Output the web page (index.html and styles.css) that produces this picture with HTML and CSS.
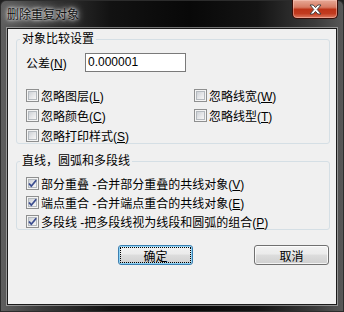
FILE: index.html
```html
<!DOCTYPE html>
<html>
<head>
<meta charset="utf-8">
<link rel="stylesheet" href="styles.css">
</head>
<body>
<div class="window">
  <div class="titlebar">
    <span class="title">删除重复对象</span>
    <div class="close">
      <svg width="13" height="11" viewBox="0 0 13 11"><path d="M1 1 H4.2 L6.5 3.6 L8.8 1 H12 L8.2 5.5 L12 10 H8.8 L6.5 7.4 L4.2 10 H1 L4.8 5.5 Z" fill="#fff" stroke="#3a3a3a" stroke-width="0.9" stroke-linejoin="round"/></svg>
    </div>
  </div>
  <div class="client">
    <fieldset class="group g1">
      <legend>对象比较设置</legend>
      <div class="tol">
        <span class="lbl">公差(<u>N</u>)</span>
        <div class="input">0.000001</div>
      </div>
      <div class="opts">
        <div class="cbrow"><span class="cb"><i></i></span><span>忽略图层(<u>L</u>)</span></div>
        <div class="cbrow"><span class="cb"><i></i></span><span>忽略线宽(<u>W</u>)</span></div>
        <div class="cbrow"><span class="cb"><i></i></span><span>忽略颜色(<u>C</u>)</span></div>
        <div class="cbrow"><span class="cb"><i></i></span><span>忽略线型(<u>T</u>)</span></div>
        <div class="cbrow"><span class="cb"><i></i></span><span>忽略打印样式(<u>S</u>)</span></div>
      </div>
    </fieldset>
    <fieldset class="group g2">
      <legend>直线，圆弧和多段线</legend>
      <div class="list">
        <div class="cbrow"><span class="cb checked"><i></i><svg class="tick" width="13" height="13" viewBox="0 0 13 13"><path d="M3 6.5 L5.3 9.2 L10.2 3.2" fill="none" stroke="#3b4d8f" stroke-width="1.8"/></svg></span><span>部分重叠 -合并部分重叠的共线对象(<u>V</u>)</span></div>
        <div class="cbrow"><span class="cb checked"><i></i><svg class="tick" width="13" height="13" viewBox="0 0 13 13"><path d="M3 6.5 L5.3 9.2 L10.2 3.2" fill="none" stroke="#3b4d8f" stroke-width="1.8"/></svg></span><span>端点重合 -合并端点重合的共线对象(<u>E</u>)</span></div>
        <div class="cbrow"><span class="cb checked"><i></i><svg class="tick" width="13" height="13" viewBox="0 0 13 13"><path d="M3 6.5 L5.3 9.2 L10.2 3.2" fill="none" stroke="#3b4d8f" stroke-width="1.8"/></svg></span><span>多段线 -把多段线视为线段和圆弧的组合(<u>P</u>)</span></div>
      </div>
    </fieldset>
    <div class="buttons">
      <div class="btn default">确定</div>
      <div class="btn">取消</div>
    </div>
  </div>
</div>
</body>
</html>
```
FILE: styles.css
```css
html, body {
  margin: 0;
  padding: 0;
}
body {
  width: 344px;
  height: 312px;
  overflow: hidden;
  background: #202020;
  font-family: "Liberation Sans", "Noto Sans CJK SC", sans-serif;
  font-size: 12px;
  color: #000;
}
.window {
  width: 344px;
  height: 312px;
  box-sizing: border-box;
  display: flex;
  flex-direction: column;
  padding: 0 6px 6px 6px;
  border: 1px solid #2c2c2c;
  border-radius: 6px 6px 0 0;
  background: linear-gradient(90deg, #5e5e5e 0%, #3a3a3a 12%, #121212 32%, #080808 55%, #141414 75%, #3c3c3c 92%, #585858 100%);
}
.titlebar {
  height: 27px;
  display: flex;
  align-items: flex-start;
  flex: none;
}
.title {
  margin-top: 6px;
  line-height: 16px;
  font-size: 12px;
  color: #111;
  text-shadow: 0 0 3px rgba(255,255,255,0.95), 0 0 6px rgba(255,255,255,0.8), 0 0 10px rgba(255,255,255,0.5);
}
.close {
  margin-left: auto;
  margin-right: -1px;
  margin-top: -1px;
  width: 46px;
  height: 19px;
  box-sizing: border-box;
  border: 1px solid #3a0d06;
  border-top: none;
  border-radius: 0 0 5px 5px;
  background: linear-gradient(#e7a996 0%, #d77b63 40%, #bd3418 52%, #c23b1f 75%, #de7a60 100%);
  box-shadow: inset 0 0 0 1px rgba(255,210,200,0.45);
  display: flex;
  align-items: center;
  justify-content: center;
}
.client {
  flex: 1;
  box-sizing: border-box;
  background: #f0f0f0;
  border: 1px solid #1a1a1a;
  box-shadow: 0 0 0 1px rgba(200,200,200,0.55);
  padding: 3px 6px 0 8px;
  display: flex;
  flex-direction: column;
}
.group {
  margin: 0;
  padding: 0 0 0 9px;
  border: 1px solid #d5dfe5;
  border-radius: 3px;
  min-width: 0;
}
.group legend {
  margin-left: -6px;
  padding: 0 2px;
  line-height: 14px;
  font-size: 12px;
}
.tol {
  display: flex;
  align-items: center;
  height: 19px;
  margin-top: 7px;
}
.lbl {
  width: 59px;
}
.input {
  width: 101px;
  height: 19px;
  box-sizing: border-box;
  border: 1px solid #7a7a7a;
  background: #fff;
  padding: 0 2px;
  line-height: 17px;
}
.opts {
  display: grid;
  grid-template-columns: 168px auto;
  row-gap: 4px;
  margin-top: 15px;
}
.cbrow {
  display: flex;
  align-items: center;
  height: 16px;
  gap: 2px;
  white-space: nowrap;
}
.cb {
  position: relative;
  flex: none;
  width: 13px;
  height: 13px;
  box-sizing: border-box;
  border: 1px solid #8e8f8f;
  background: #f4f4f4;
  padding: 1px;
}
.cb i {
  display: block;
  width: 9px;
  height: 9px;
  box-sizing: border-box;
  border: 1px solid #b4b9be;
  background: linear-gradient(135deg, #cdd1d6 0%, #e6e7e9 55%, #f6f6f6 100%);
}
.cb .tick {
  position: absolute;
  left: -1px;
  top: -1px;
}
.g2 {
  margin-top: 10px;
}
.list {
  display: flex;
  flex-direction: column;
  gap: 3px;
  margin-top: 7px;
}
.buttons {
  display: flex;
  justify-content: flex-end;
  gap: 61px;
  margin-top: 15px;
  margin-right: 1px;
}
.btn {
  position: relative;
  width: 75px;
  height: 20px;
  box-sizing: border-box;
  border: 1px solid #707070;
  border-radius: 3px;
  background: linear-gradient(#f2f2f2 0%, #ebebeb 45%, #dddddd 50%, #cfcfcf 100%);
  box-shadow: inset 0 0 0 1px rgba(255,255,255,0.75);
  display: flex;
  align-items: center;
  justify-content: center;
  font-size: 12px;
}
.btn.default {
  border-color: #3c7fb1;
  box-shadow: inset 0 0 0 1px #8fd3f5;
}
.btn.default::after {
  content: "";
  position: absolute;
  left: 1px;
  right: 1px;
  top: 1px;
  bottom: 1px;
  border: 1px dotted #000;
}
```
